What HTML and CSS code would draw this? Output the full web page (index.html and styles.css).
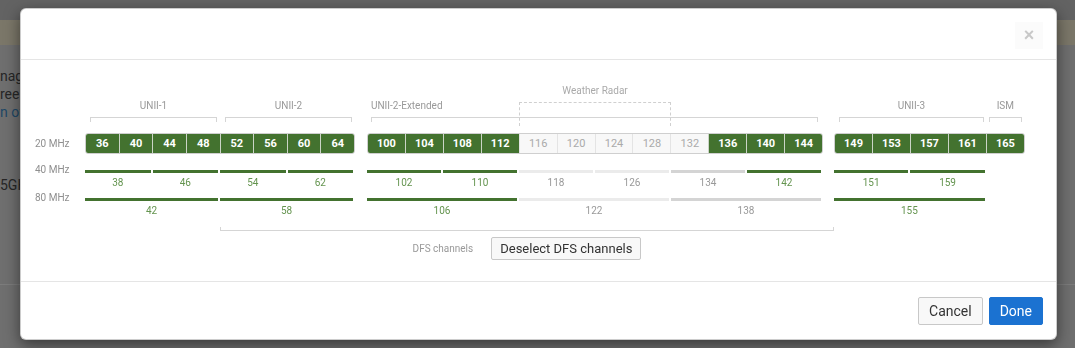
FILE: index.html
```html
<!DOCTYPE html>
<html lang="en">
<head>
  <meta charset="UTF-8" />
  <title>Channel selection</title>
  <link rel="stylesheet" href="styles.css">
</head>
<body>

  <!-- page behind the dialog -->
  <div class="page">
    <div class="page-top"></div>
    <div class="page-banner"></div>
    <div class="page-text">
      <p>nage the radios</p>
      <p>ree bands</p>
      <p class="link">n of channels</p>
      <p class="gap">5GHz</p>
    </div>
    <div class="page-foot"></div>
  </div>

  <!-- channel dialog -->
  <div class="modal">
    <div class="modal-header">
      <button class="close">&times;</button>
    </div>

    <div class="modal-body">
      <div class="chart">
        <!-- bands -->
        <div class="radar-label" style="grid-column: 15 / 19;">Weather Radar</div>
        <div class="radar-box" style="grid-column: 15 / 19;"></div>
        <div class="band" style="grid-column: 2 / 6;"><span>UNII-1</span><i></i></div>
        <div class="band" style="grid-column: 6 / 10;"><span>UNII-2</span><i></i></div>
        <div class="band band-left" style="grid-column: 11 / 23;"><span>UNII-2-Extended</span><i></i></div>
        <div class="band" style="grid-column: 24 / 28;"><span>UNII-3</span><i></i></div>
        <div class="band band-ism" style="grid-column: 28 / 29;"><span>ISM</span><i></i></div>

        <!-- 20 MHz -->
        <div class="row-label r20">20 MHz</div>
        <div class="group" style="grid-column: 2 / 10;">
          <div class="ch">36</div><div class="ch">40</div><div class="ch">44</div><div class="ch">48</div>
          <div class="ch">52</div><div class="ch">56</div><div class="ch">60</div><div class="ch">64</div>
        </div>
        <div class="group" style="grid-column: 11 / 23;">
          <div class="ch">100</div><div class="ch">104</div><div class="ch">108</div><div class="ch">112</div>
          <div class="ch off">116</div><div class="ch off">120</div><div class="ch off">124</div><div class="ch off">128</div>
          <div class="ch off">132</div><div class="ch">136</div><div class="ch">140</div><div class="ch">144</div>
        </div>
        <div class="group" style="grid-column: 24 / 29;">
          <div class="ch">149</div><div class="ch">153</div><div class="ch">157</div><div class="ch">161</div><div class="ch">165</div>
        </div>

        <!-- 40 MHz -->
        <div class="row-label r40">40 MHz</div>
        <div class="bar r40" style="grid-column: 2 / 4;"><b></b>38</div>
        <div class="bar r40" style="grid-column: 4 / 6;"><b></b>46</div>
        <div class="bar r40" style="grid-column: 6 / 8;"><b></b>54</div>
        <div class="bar r40" style="grid-column: 8 / 10;"><b></b>62</div>
        <div class="bar r40" style="grid-column: 11 / 13;"><b></b>102</div>
        <div class="bar r40" style="grid-column: 13 / 15;"><b></b>110</div>
        <div class="bar r40 off" style="grid-column: 15 / 17;"><b></b>118</div>
        <div class="bar r40 off" style="grid-column: 17 / 19;"><b></b>126</div>
        <div class="bar r40 part" style="grid-column: 19 / 21;"><b></b>134</div>
        <div class="bar r40" style="grid-column: 21 / 23;"><b></b>142</div>
        <div class="bar r40" style="grid-column: 24 / 26;"><b></b>151</div>
        <div class="bar r40" style="grid-column: 26 / 28;"><b></b>159</div>

        <!-- 80 MHz -->
        <div class="row-label r80">80 MHz</div>
        <div class="bar r80" style="grid-column: 2 / 6;"><b></b>42</div>
        <div class="bar r80" style="grid-column: 6 / 10;"><b></b>58</div>
        <div class="bar r80" style="grid-column: 11 / 15;"><b></b>106</div>
        <div class="bar r80 off" style="grid-column: 15 / 19;"><b></b>122</div>
        <div class="bar r80 part" style="grid-column: 19 / 23;"><b></b>138</div>
        <div class="bar r80" style="grid-column: 24 / 28;"><b></b>155</div>

        <!-- DFS -->
        <div class="dfs-bracket" style="grid-column: 6 / 24;"></div>
        <div class="dfs-row" style="grid-column: 6 / 24;">
          <span>DFS channels</span>
          <button class="btn">Deselect DFS channels</button>
        </div>
      </div>
    </div>

    <div class="modal-footer">
      <button class="btn btn-cancel">Cancel</button>
      <button class="btn btn-done">Done</button>
    </div>
  </div>

</body>
</html>
```

FILE: styles.css
```css
body {
  margin: 0;
  height: 100vh;
  overflow: hidden;
  background: #6f6f6f;
  font-family: Roboto, 'Liberation Sans', Arial, sans-serif;
}

/* PAGE BEHIND */
.page-top {
  height: 20px;
  background: #636363;
}

.page-banner {
  height: 25px;
  background: #7b7769;
}

.page-text {
  padding-top: 22px;
  font-size: 14px;
  line-height: 18px;
  color: #262626;
}

.page-text p {
  margin: 0;
  white-space: nowrap;
}

.page-text .link {
  color: #1d4766;
}

.page-text .gap {
  margin-top: 55px;
}

.page-foot {
  margin-top: 90px;
  border-top: 1px solid #7c7c7c;
}

/* DIALOG */
.modal {
  position: fixed;
  top: 8px;
  left: 20px;
  width: 1037px;
  box-sizing: border-box;
  background: #fff;
  border: 1px solid rgba(0, 0, 0, 0.2);
  border-radius: 6px;
  box-shadow: 0 5px 15px rgba(0, 0, 0, 0.5);
}

.modal-header {
  height: 50px;
  border-bottom: 1px solid #e5e5e5;
  display: flex;
  justify-content: flex-end;
  align-items: flex-start;
  padding: 0 13px;
}

.close {
  margin-top: 13px;
  width: 28px;
  height: 27px;
  border: none;
  background: #fbfbfb;
  color: #c8c8c8;
  font-size: 18px;
  font-weight: bold;
  line-height: 27px;
  padding: 0;
  font-family: 'Liberation Sans', Arial, sans-serif;
}

.modal-body {
  padding: 24px 14px 21px;
}

.modal-footer {
  border-top: 1px solid #e5e5e5;
  padding: 15px 13px 14px;
  display: flex;
  justify-content: flex-end;
  gap: 6px;
}

/* CHART */
.chart {
  display: grid;
  grid-template-columns: 50px repeat(8, 33.75px) 12px repeat(12, 38px) 11px repeat(5, 38.2px);
  font-size: 10px;
  color: #999;
}

.radar-label {
  grid-row: 1;
  text-align: center;
  line-height: 12px;
  margin-top: 1px;
  color: #aaa;
}

.radar-box {
  grid-row: 2;
  align-self: start;
  margin-top: 5px;
  height: 24px;
  box-sizing: border-box;
  border: 1px dashed #d0d0d0;
  border-bottom: none;
}

.band {
  grid-row: 2;
  padding-top: 3px;
  margin: 0 3px 0 5px;
  text-align: center;
}

.band span {
  display: block;
  line-height: 12px;
}

.band i {
  display: block;
  margin-top: 5px;
  height: 4px;
  border: 1px solid #d5d5d5;
  border-bottom: none;
}

.band-left {
  text-align: left;
  margin: 0 5px 0 4px;
}

.band-ism {
  margin: 0 3px 0 2px;
}

.row-label {
  grid-column: 1;
  line-height: 12px;
  color: #8f8f8f;
}

.row-label.r20 {
  grid-row: 3;
  align-self: center;
  margin-top: 7px;
}

.row-label.r40 {
  grid-row: 4;
  margin-top: 10px;
}

.row-label.r80 {
  grid-row: 5;
  margin-top: 3px;
}

.group {
  grid-row: 3;
  margin-top: 7px;
  height: 21px;
  box-sizing: border-box;
  display: flex;
  border: 1px solid #cfcfcf;
  border-radius: 3px;
  overflow: hidden;
}

.ch {
  flex: 1;
  background: #43722f;
  color: #fff;
  font-size: 11px;
  font-weight: bold;
  line-height: 19px;
  text-align: center;
  border-left: 1px solid #cbd4c6;
}

.ch:first-child {
  border-left: none;
}

.ch.off {
  background: #f8f8f8;
  color: #aaa;
  font-weight: normal;
  border-left-color: #e4e4e4;
}

.bar {
  text-align: center;
  line-height: 12px;
  color: #64944f;
  margin-right: 2px;
}

.bar b {
  display: block;
  height: 3px;
  background: #43722f;
  margin-bottom: 4px;
}

.bar.r40 {
  grid-row: 4;
  margin-top: 16px;
}

.bar.r80 {
  grid-row: 5;
  margin-top: 9px;
}

.bar.off,
.bar.part {
  color: #999;
}

.bar.off b {
  background: #ebebeb;
}

.bar.part b {
  background: #d4d4d4;
}

.dfs-bracket {
  grid-row: 6;
  margin-top: 10px;
  height: 3px;
  border: 1px solid #d5d5d5;
  border-top: none;
}

.dfs-row {
  grid-row: 7;
  margin-top: 6px;
  display: flex;
  justify-content: center;
  align-items: center;
  gap: 18px;
}

.btn {
  font-family: Roboto, 'Liberation Sans', Arial, sans-serif;
  background: #f8f8f8;
  border: 1px solid #c8c8c8;
  border-radius: 2px;
  color: #333;
  cursor: pointer;
}

.dfs-row .btn {
  height: 23px;
  font-size: 13px;
  padding: 0 8px;
}

.modal-footer .btn {
  height: 28px;
  font-size: 14px;
  padding: 0 10px;
}

.btn-done {
  background: #1b72d1;
  border-color: #1b72d1;
  color: #fff;
}
```
